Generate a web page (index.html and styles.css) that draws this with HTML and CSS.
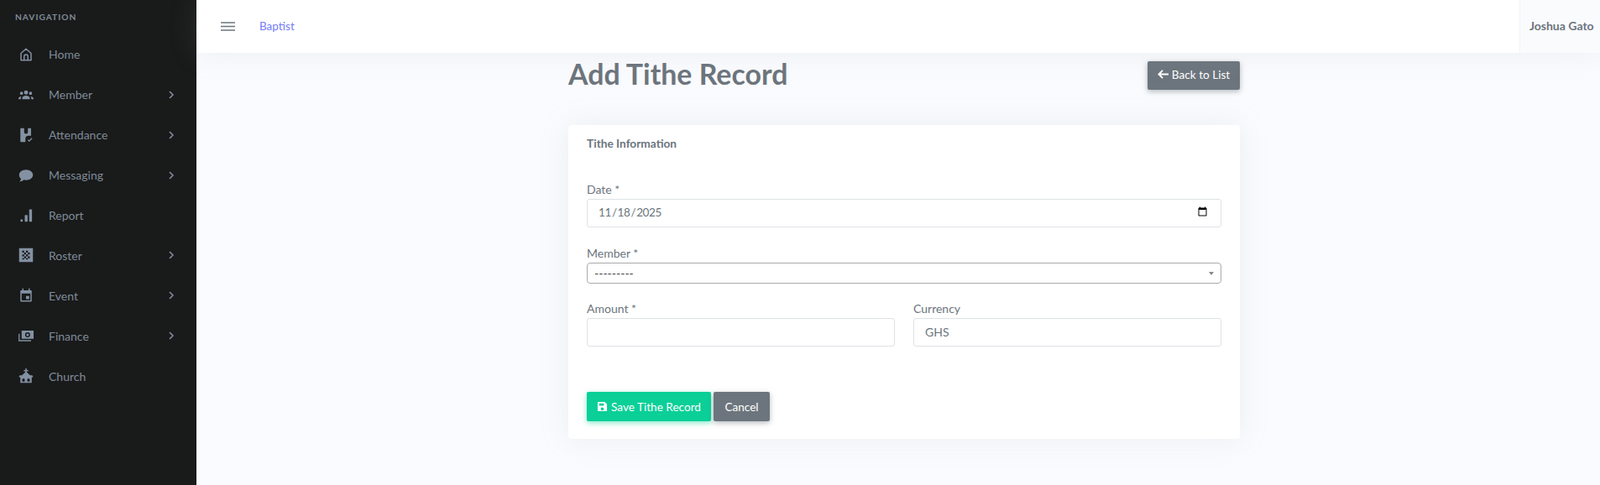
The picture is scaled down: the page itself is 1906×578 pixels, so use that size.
FILE: index.html
```html
<!DOCTYPE html>
<html lang="en">
<head>
  <meta charset="UTF-8" />
  <meta name="viewport" content="width=device-width, initial-scale=1.0"/>
  <title>Add Tithe Record</title>
  <link rel="stylesheet" href="styles.css">
</head>
<body>
  <aside class="sidebar">
    <div class="nav-title">Navigation</div>
    <nav class="side-nav">
      <a class="side-link" href="#">
        <svg class="side-icon" viewBox="0 0 24 24"><path fill="none" stroke="currentColor" stroke-width="2" stroke-linejoin="round" d="M4 21V10l8-7 8 7v11zM9 21v-6a3 3 0 0 1 6 0v6"/></svg>
        <span class="side-text">Home</span>
      </a>
      <a class="side-link" href="#">
        <svg class="side-icon" viewBox="0 0 24 24"><path fill="currentColor" d="M12 5a3.300 3.300 0 1 1 0 6.600A3.300 3.300 0 0 1 12 5zM4.800 7a2.500 2.500 0 1 1 0 5 2.500 2.500 0 0 1 0-5zM19.200 7a2.500 2.500 0 1 1 0 5 2.500 2.500 0 0 1 0-5zM6 19v-1.700c0-2.300 2.700-3.900 6-3.900s6 1.600 6 3.900V19zM0 19v-1.300c0-1.700 1.800-3 4.700-3.200-.7.800-1 1.800-1 2.800V19zM24 19v-1.300c0-1.700-1.800-3-4.700-3.200.7.800 1 1.800 1 2.800V19z"/></svg>
        <span class="side-text">Member</span>
        <svg class="side-chevron" viewBox="0 0 10 10"><path fill="none" stroke="currentColor" stroke-width="1.500" d="M3 1l4 4-4 4"/></svg>
      </a>
      <a class="side-link" href="#">
        <svg class="side-icon" viewBox="0 0 24 24"><path fill="currentColor" d="M4 1h5v6a3 3 0 0 0 6 0V1h4a1 1 0 0 1 1 1v11h-4a5 5 0 0 0-5 5v5H4a1 1 0 0 1-1-1V2a1 1 0 0 1 1-1z"/><path fill="none" stroke="currentColor" stroke-width="1.800" d="M15 19.500l2 2 4.500-4.500"/></svg>
        <span class="side-text">Attendance</span>
        <svg class="side-chevron" viewBox="0 0 10 10"><path fill="none" stroke="currentColor" stroke-width="1.500" d="M3 1l4 4-4 4"/></svg>
      </a>
      <a class="side-link" href="#">
        <svg class="side-icon" viewBox="0 0 24 24"><path fill="currentColor" d="M12 3c6 0 11 3.700 11 8.300s-5 8.300-11 8.300c-1.300 0-2.500-.2-3.600-.5C6.800 21 4.500 22 1.500 22c1.500-1.400 2.300-3 2.600-4.600C2.200 15.900 1 13.700 1 11.300 1 6.700 6 3 12 3z"/></svg>
        <span class="side-text">Messaging</span>
        <svg class="side-chevron" viewBox="0 0 10 10"><path fill="none" stroke="currentColor" stroke-width="1.500" d="M3 1l4 4-4 4"/></svg>
      </a>
      <a class="side-link" href="#">
        <svg class="side-icon" viewBox="0 0 24 24"><circle cx="5" cy="19.500" r="2" fill="currentColor"/><rect x="10" y="11" width="4.500" height="10.500" rx="1" fill="currentColor"/><rect x="17" y="2" width="4.500" height="19.500" rx="1" fill="currentColor"/></svg>
        <span class="side-text">Report</span>
      </a>
      <a class="side-link" href="#">
        <svg class="side-icon" viewBox="0 0 24 24"><path fill="currentColor" fill-rule="evenodd" d="M1 1h22v22H1zM6 5v3h3V5zM12 5v3h3V5zM9 8v3h3V8zM15 8v3h3V8zM6 11v3h3v-3zM12 11v3h3v-3zM9 14v3h3v-3zM15 14v3h3v-3zM6 17v2h3v-2zM12 17v2h3v-2z"/></svg>
        <span class="side-text">Roster</span>
        <svg class="side-chevron" viewBox="0 0 10 10"><path fill="none" stroke="currentColor" stroke-width="1.500" d="M3 1l4 4-4 4"/></svg>
      </a>
      <a class="side-link" href="#">
        <svg class="side-icon" viewBox="0 0 24 24"><path fill="currentColor" fill-rule="evenodd" d="M6 1h2v3h8V1h2v3h2a1 1 0 0 1 1 1v16a1 1 0 0 1-1 1H4a1 1 0 0 1-1-1V5a1 1 0 0 1 1-1h2zM5 9v11h14V9zM12 13h5v5h-5z"/></svg>
        <span class="side-text">Event</span>
        <svg class="side-chevron" viewBox="0 0 10 10"><path fill="none" stroke="currentColor" stroke-width="1.500" d="M3 1l4 4-4 4"/></svg>
      </a>
      <a class="side-link" href="#">
        <svg class="side-icon" viewBox="0 0 24 24"><path fill="currentColor" fill-rule="evenodd" d="M5 4h19v13H5zM14.500 6.500a4 4 0 1 0 0 8 4 4 0 0 0 0-8z"/><circle cx="14.500" cy="10.500" r="2" fill="currentColor"/><path fill="none" stroke="currentColor" stroke-width="1.800" d="M1 9v11h19"/></svg>
        <span class="side-text">Finance</span>
        <svg class="side-chevron" viewBox="0 0 10 10"><path fill="none" stroke="currentColor" stroke-width="1.500" d="M3 1l4 4-4 4"/></svg>
      </a>
      <a class="side-link" href="#">
        <svg class="side-icon" viewBox="0 0 24 24"><path fill="currentColor" fill-rule="evenodd" d="M11 0h2v2.500h2.500v2H13V6l5.500 5H22l1.500 3H21v9H3v-9H.5L2 11h3.500L11 6V4.500H8.500v-2H11zM6 21h4v-3a2 2 0 0 0-4 0zM14 21h4v-3a2 2 0 0 0-4 0z"/></svg>
        <span class="side-text">Church</span>
      </a>
    </nav>
  </aside>

  <div class="page">
    <header class="topbar">
      <svg class="menu-icon" viewBox="0 0 17 11"><path stroke="currentColor" stroke-width="1.600" d="M0 1h17M0 5.500h17M0 10h17"/></svg>
      <a class="church-link" href="#">Baptist</a>
      <div class="user-box">Joshua Gato</div>
    </header>

    <main class="content">
      <div class="title-row">
        <h1 class="page-title">Add Tithe Record</h1>
        <a class="btn btn-grey btn-back" href="#">
          <svg class="btn-icon" viewBox="0 0 14 12"><path fill="none" stroke="currentColor" stroke-width="2" d="M6.500 1L1.500 6l5 5M2 6h12"/></svg>
          Back to List
        </a>
      </div>

      <form class="card">
        <h2 class="card-title">Tithe Information</h2>

        <div class="field">
          <label class="field-label">Date *</label>
          <input class="field-input field-date" type="date" value="2025-11-18" />
        </div>

        <div class="field">
          <label class="field-label">Member *</label>
          <div class="fake-select">
            <span>---------</span>
            <span class="select-arrow"></span>
          </div>
        </div>

        <div class="field-row">
          <div class="field">
            <label class="field-label">Amount *</label>
            <input class="field-input" type="text" />
          </div>
          <div class="field">
            <label class="field-label">Currency</label>
            <input class="field-input" type="text" value="GHS" />
          </div>
        </div>

        <div class="form-actions">
          <button class="btn btn-green" type="button">
            <svg class="btn-icon" viewBox="0 0 14 14"><path fill="currentColor" fill-rule="evenodd" d="M2 1h8l3 3v8a1 1 0 0 1-1 1H2a1 1 0 0 1-1-1V2a1 1 0 0 1 1-1zM3 3v3h6V3zM7 8a2 2 0 1 0 0 4 2 2 0 0 0 0-4z"/></svg>
            Save Tithe Record
          </button>
          <a class="btn btn-grey" href="#">Cancel</a>
        </div>
      </form>
    </main>
  </div>
</body>
</html>
```

FILE: styles.css
```css
* {
  box-sizing: border-box;
}
html, body {
  height: 100%;
}
body {
  margin: 0;
  display: flex;
  overflow: hidden;
  background-color: #fafbfe;
  color: #6c757d;
  font-family: "Lato", "Noto Sans", sans-serif;
  font-size: 14px;
}
a {
  text-decoration: none;
}
.sidebar {
  width: 234px;
  flex-shrink: 0;
  background-color: #191a1a;
  color: #8391a2;
}
.nav-title {
  padding: 14px 18px 0;
  height: 41px;
  font-size: 10.200px;
  font-weight: 700;
  letter-spacing: 1px;
  text-transform: uppercase;
  color: #7f8a98;
}
.side-link {
  display: flex;
  align-items: center;
  height: 47.900px;
  padding-left: 22px;
  color: #8391a2;
}
.side-icon {
  width: 18px;
  height: 18px;
  margin-right: 18px;
  flex-shrink: 0;
}
.side-text {
  flex-grow: 1;
  color: #7f8a98;
}
.side-chevron {
  width: 10px;
  height: 10px;
  margin-right: 25px;
}
.page {
  flex-grow: 1;
  min-width: 0;
}
.topbar {
  display: flex;
  align-items: center;
  height: 63px;
  padding-left: 29px;
  background-color: #fff;
  box-shadow: 0 0 35px rgba(154, 161, 171, .15);
  position: relative;
}
.menu-icon {
  width: 17px;
  height: 11px;
  margin-right: 29px;
  color: #6c757d;
}
.church-link {
  color: #727cf5;
  flex-grow: 1;
  font-size: 13.500px;
  padding-bottom: 2px;
}
.user-box {
  width: 96px;
  height: 63px;
  padding-left: 11px;
  line-height: 61px;
  font-weight: 700;
  background-color: #fafbfd;
  border-left: 1px solid #f1f3fa;
  white-space: nowrap;
}
.content {
  width: 800px;
  margin-left: 443px;
}
.title-row {
  display: flex;
  justify-content: space-between;
  align-items: flex-start;
  height: 86px;
  padding-top: 10px;
}
.page-title {
  margin: 0;
  font-size: 33.900px;
  line-height: 30px;
  font-weight: 700;
  color: #6c757d;
}
.btn {
  display: inline-flex;
  align-items: center;
  justify-content: center;
  height: 35px;
  padding: 0 10px;
  border: none;
  border-radius: 2px;
  font-family: inherit;
  font-size: 13.600px;
  color: #fff;
  white-space: nowrap;
}
.btn-icon {
  width: 13px;
  height: 13px;
  margin-right: 4px;
}
.btn-grey {
  background-color: #6c757d;
  box-shadow: 0 2px 6px 0 rgba(108, 117, 125, .5);
}
.btn-green {
  background-color: #0acf97;
  box-shadow: 0 2px 6px 0 rgba(10, 207, 151, .5);
}
.btn-back {
  width: 110px;
  height: 34px;
  padding-bottom: 3px;
}
.card {
  height: 374px;
  padding: 12px 22px 0;
  background-color: #fff;
  border-radius: 4px;
  box-shadow: 0 0 35px rgba(154, 161, 171, .15);
}
.card-title {
  margin: 0 0 35px;
  font-size: 13.700px;
  line-height: 20px;
  font-weight: 700;
}
.field {
  margin-bottom: 21px;
}
.field-label {
  display: block;
  height: 20px;
  line-height: 20px;
  margin-bottom: 1px;
}
.field-input {
  display: block;
  width: 100%;
  height: 34px;
  padding: 0 13px 2px;
  border: 1px solid #dee2e6;
  border-radius: 3px;
  background-color: #fff;
  color: #6c757d;
  font-family: inherit;
  font-size: 14px;
}
.field-date {
  font-size: 13.500px;
  letter-spacing: -.4px;
  padding-left: 12px;
}
.fake-select {
  display: flex;
  align-items: center;
  justify-content: space-between;
  height: 25px;
  margin-bottom: -1px;
  padding: 0 8px;
  border: 1px solid #aaa;
  border-radius: 4px;
  color: #444;
}
.select-arrow {
  width: 0;
  height: 0;
  border-left: 3px solid transparent;
  border-right: 3px solid transparent;
  border-top: 4px solid #888;
}
.field-row {
  display: grid;
  grid-template-columns: 1fr 1fr;
  gap: 22px;
}
.form-actions {
  display: flex;
  gap: 3px;
  margin-top: 33px;
}
.form-actions .btn-green {
  width: 148px;
}
.form-actions .btn-grey {
  width: 67px;
}
```
